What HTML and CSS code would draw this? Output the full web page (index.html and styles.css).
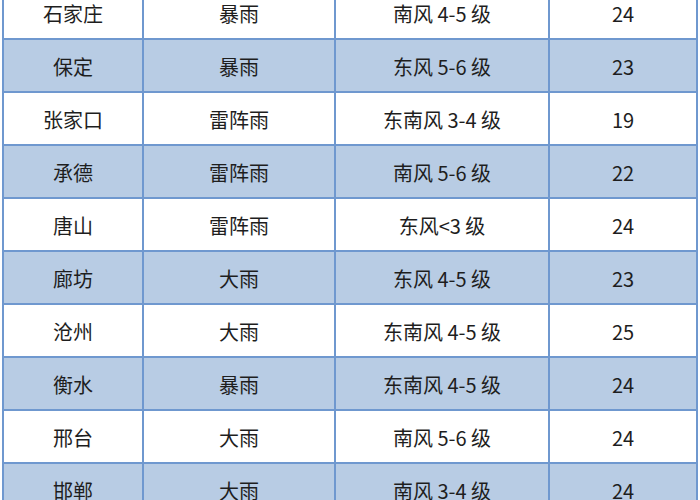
FILE: index.html
```html
<!DOCTYPE html>
<html lang="zh">
<head>
<meta charset="utf-8">
<link rel="stylesheet" href="styles.css">
</head>
<body>
<div class="frame">
<table class="weather">
<colgroup>
<col class="c1"><col class="c2"><col class="c3"><col class="c4">
</colgroup>
<tbody>
<tr><td>石家庄</td><td>暴雨</td><td>南风 4-5 级</td><td>24</td></tr>
<tr class="alt"><td>保定</td><td>暴雨</td><td>东风 5-6 级</td><td>23</td></tr>
<tr><td>张家口</td><td>雷阵雨</td><td>东南风 3-4 级</td><td>19</td></tr>
<tr class="alt"><td>承德</td><td>雷阵雨</td><td>南风 5-6 级</td><td>22</td></tr>
<tr><td>唐山</td><td>雷阵雨</td><td>东风&lt;3 级</td><td>24</td></tr>
<tr class="alt"><td>廊坊</td><td>大雨</td><td>东风 4-5 级</td><td>23</td></tr>
<tr><td>沧州</td><td>大雨</td><td>东南风 4-5 级</td><td>25</td></tr>
<tr class="alt"><td>衡水</td><td>暴雨</td><td>东南风 4-5 级</td><td>24</td></tr>
<tr><td>邢台</td><td>大雨</td><td>南风 5-6 级</td><td>24</td></tr>
<tr class="alt"><td>邯郸</td><td>大雨</td><td>南风 3-4 级</td><td>24</td></tr>
</tbody>
</table>
</div>
</body>
</html>
```
FILE: styles.css
```css
html, body {
  margin: 0;
  padding: 0;
  background: #ffffff;
}
.frame {
  width: 700px;
  height: 500px;
  overflow: hidden;
}
.weather {
  border-collapse: collapse;
  table-layout: fixed;
  width: 694px;
  margin: -15px 0 0 2px;
  font-family: "Noto Sans CJK SC", "Noto Sans", sans-serif;
  font-size: 20px;
  color: #1e1e1e;
}
.c1 { width: 140px; }
.c2 { width: 192px; }
.c3 { width: 214px; }
.c4 { width: 148px; }
.weather td {
  border: 2px solid #6f98cf;
  height: 49px;
  padding: 2px 0 0;
  text-align: center;
  vertical-align: middle;
  line-height: 1;
}
.weather tr.alt td {
  background: #b8cce4;
}
```
